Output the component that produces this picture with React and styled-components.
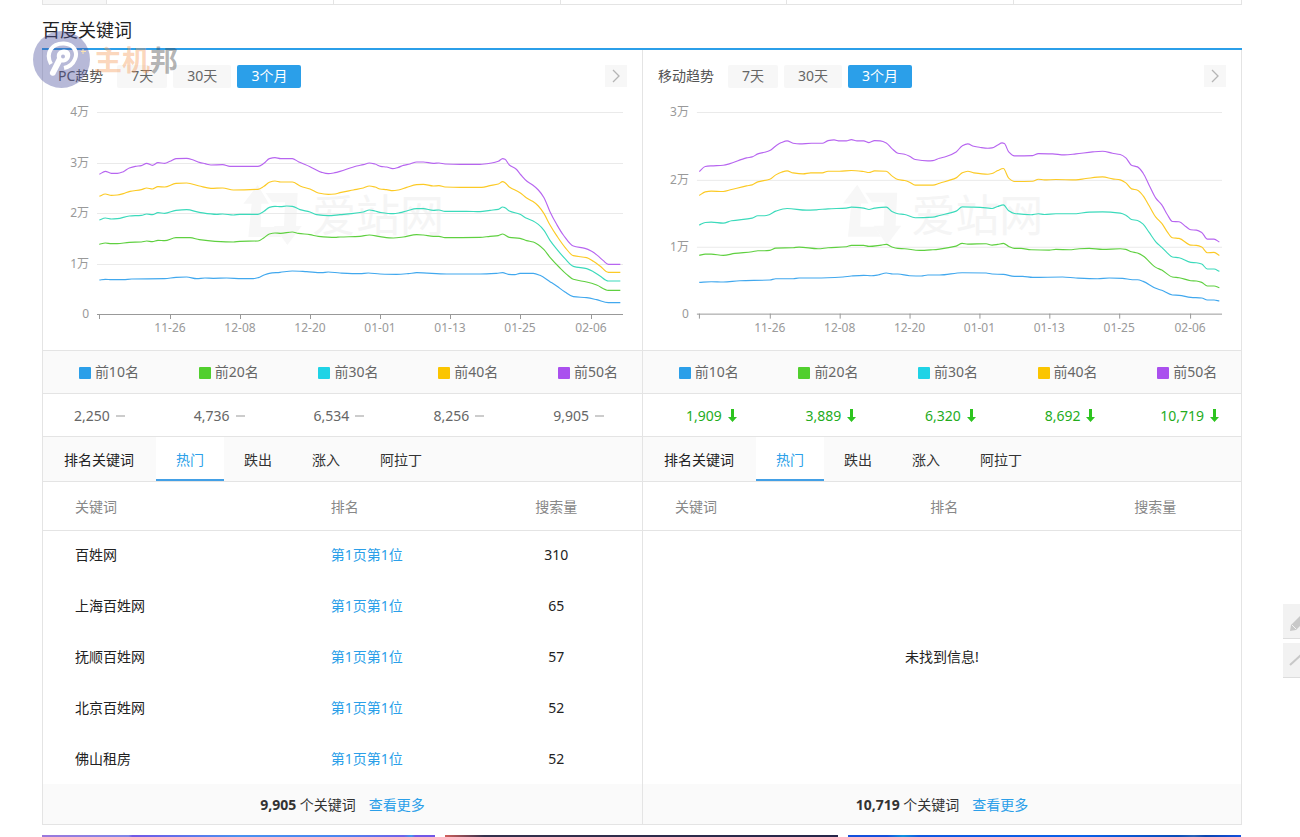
import React from "react";
import styled, { createGlobalStyle, css } from "styled-components";

const GlobalStyle = createGlobalStyle`
  *, *::before, *::after { box-sizing: border-box; }
  body {
    margin: 0;
    background: #fff;
    color: #333;
    font: 14px/20px "Noto Sans", "Noto Sans CJK SC", sans-serif;
  }
  button { font: inherit; border: 0; cursor: pointer; }
  a { text-decoration: none; }
`;

const Page = styled.div`
  padding: 0 58px 0 42px;
`;

const Content = styled.div`
  position: relative;
  max-width: 1200px;
  margin: 0 auto;
`;

const TopStrip = styled.div`
  display: grid;
  grid-template-columns: 64px repeat(5, 1fr);
  height: 5px;
  border: 1px solid #e4e4e4;
  border-top: 0;
`;

const TopCell = styled.div`
  border-right: 1px solid #e4e4e4;
  &:first-child { background: #f7f7f7; }
  &:last-child { border-right: 0; }
`;

const Title = styled.h2`
  margin: 0;
  height: 45px;
  padding-top: 12px;
  font-size: 18px;
  line-height: 26px;
  font-weight: 400;
  color: #222;
  border-bottom: 2px solid #2b9fe9;
`;

const Panels = styled.div`
  display: grid;
  grid-template-columns: 1fr 1fr;
  border: 1px solid #e4e4e4;
  border-top: 0;
`;

const Panel = styled.section`
  min-width: 0;
  & + & { border-left: 1px solid #e4e4e4; }
`;

const Toolbar = styled.div`
  display: flex;
  align-items: flex-start;
  gap: 6px;
  height: 50px;
  padding: 15px 15px 0;
`;

const ToolLabel = styled.span`
  margin-right: 8px;
  line-height: 22px;
  color: #555;
`;

const RangeButton = styled.button`
  height: 23px;
  padding: 0 14px 1px;
  line-height: 22px;
  border-radius: 2px;
  color: ${(p) => (p.$active ? "#fff" : "#666")};
  background: ${(p) => (p.$active ? "#2b9fe9" : "#f7f7f7")};
`;

const NextButton = styled.button`
  display: flex;
  align-items: center;
  justify-content: center;
  width: 22px;
  height: 22px;
  margin-left: auto;
  padding: 0;
  background: #f7f7f7;
`;

const ChartSvg = styled.svg`
  display: block;
  width: 100%;
  height: auto;
  text { font-size: 12px; fill: #999; }
  .mark { font-size: 44px; fill: #f5f5f5; }
`;

const Strip = styled.div`
  display: grid;
  grid-template-columns: repeat(5, 1fr);
  align-items: center;
  height: 43px;
  border-top: 1px solid #e4e4e4;
  background: ${(p) => (p.$shaded ? "#fafafa" : "#fff")};
`;

const StripCell = styled.div`
  display: flex;
  align-items: center;
  justify-content: center;
  gap: ${(p) => p.$gap}px;
  padding-top: ${(p) => p.$top || 0}px;
  padding-left: ${(p) => p.$left || 0}px;
  padding-right: ${(p) => p.$right || 0}px;
  color: ${(p) => (p.$down ? "#24ac1c" : "#666")};
`;

const Swatch = styled.span`
  width: 12px;
  height: 12px;
  margin-top: 2px;
  border-radius: 1px;
  background: ${(p) => p.$color};
`;

const Dash = styled.span`
  width: 9px;
  height: 2px;
  background: #ccc;
`;

const Tabs = styled.div`
  display: flex;
  height: 46px;
  border-top: 1px solid #e4e4e4;
  border-bottom: 1px solid #e4e4e4;
  background: #fafafa;
`;

const TabsLabel = styled.span`
  padding: 0 22px 0 21px;
  line-height: 46px;
  color: #222;
`;

const Tab = styled.button`
  padding: 4px 20px 0;
  background: transparent;
  border-bottom: 2px solid transparent;
  color: #333;
  ${(p) =>
    p.$active &&
    css`
      background: #fff;
      color: #2b9fe9;
      border-bottom-color: #43a0e6;
    `}
`;

const Table = styled.table`
  width: 100%;
  table-layout: fixed;
  border-collapse: separate;
  border-spacing: 0;
  th, td { padding: 0 32px; text-align: left; font-weight: 400; }
  th { height: 49px; padding-top: 2px; color: #888; border-bottom: 1px solid #e4e4e4; }
  td { height: 51px; color: #222; }
  tbody tr:first-child td { height: 49px; padding-bottom: 2px; }
  th:nth-child(1) { width: 42.7%; padding-right: 0; }
  th:nth-child(3), td:nth-child(3) { padding-left: 0; padding-right: 0; text-align: center; }
`;

const Empty = styled.p`
  display: flex;
  align-items: center;
  justify-content: center;
  height: 253px;
  margin: 0;
  color: #222;
`;

const Link = styled.a`
  color: #2b9fe9;
`;

const Footer = styled.div`
  display: flex;
  justify-content: center;
  gap: 13px;
  padding: 11px 0 9px;
  background: #fafafa;
`;

const Banners = styled.div`
  display: grid;
  grid-template-columns: repeat(3, 1fr);
  gap: 10px;
  margin-top: 10px;
  padding-right: 1px;
`;

const Banner = styled.a`
  height: 2px;
  background: ${(p) => p.$fill};
`;

const SiteMark = styled.div`
  position: absolute;
  top: 31px;
  left: -9px;
  display: flex;
  align-items: center;
  gap: 4px;
  pointer-events: none;
`;

const SiteName = styled.span`
  font-size: 28px;
  line-height: 40px;
  font-weight: 700;
  color: rgba(245, 150, 80, 0.4);
  span { color: rgba(60, 60, 60, 0.4); }
`;

const SideTools = styled.div`
  position: fixed;
  top: 604px;
  right: 0;
  display: grid;
  gap: 4px;
  width: 17px;
  overflow: hidden;
`;

const SideButton = styled.button`
  width: 36px;
  height: 35px;
  padding: 0;
  background: #f2f2f2;
  border-bottom: 1px solid #ddd;
  svg { display: block; }
`;

const COLORS = ["#2b9fe9", "#51cf2e", "#1fd3e6", "#fbc500", "#aa50ee"];
const LINES = ["#41a8ee", "#5fd040", "#3bdabb", "#fcca25", "#b765f0"];
const RANKS = ["前10名", "前20名", "前30名", "前40名", "前50名"];
const DATES = ["11-26", "12-08", "12-20", "01-01", "01-13", "01-25", "02-06"];
const TICKS = [127, 197, 267, 337, 407, 477, 548];

// Each series is a list of "x,y" points on a grid of three units per chart unit.
const PC_SERIES = [
  "178,555 196,553 214,554 250,554 275,552 374,551 408,547 440,546 470,551 495,549 520,550 560,549 605,551 640,551 655,548 672,540 688,535 720,532 757,528 800,530 845,533 865,531 900,534 960,536 985,534 1020,537 1070,538 1105,536 1130,533 1220,537 1320,537 1370,535 1388,533 1405,538 1425,539 1440,535 1480,535 1500,541 1530,560 1550,573 1575,591 1600,605 1640,608 1670,614 1705,623 1741,623",
  "178,448 196,444 214,446 232,446 268,442 304,441 320,438 337,440 354,436 374,437 408,428 450,428 478,434 525,439 580,441 600,439 654,438 672,428 688,417 705,414 722,415 757,411 775,415 810,419 835,424 885,427 900,426 960,424 988,420 1020,425 1060,429 1090,426 1130,419 1150,420 1180,424 1197,424 1215,428 1320,427 1350,424 1375,422 1388,417 1408,427 1440,430 1460,437 1480,441 1495,449 1512,464 1530,487 1560,519 1580,538 1600,553 1640,561 1670,570 1705,586 1741,586",
  "178,375 196,369 214,372 232,371 268,363 304,361 320,357 337,359 354,353 374,355 408,346 440,344 478,352 530,358 548,357 580,360 600,358 654,358 672,349 688,337 705,334 722,335 740,333 757,334 780,344 810,351 830,359 865,362 900,359 935,356 970,351 988,345 1005,348 1020,352 1060,356 1080,353 1100,348 1130,341 1150,341 1180,346 1197,345 1215,349 1280,349 1320,350 1350,346 1375,343 1388,336 1395,338 1408,348 1440,358 1460,370 1478,377 1495,388 1512,406 1530,436 1550,462 1575,491 1600,514 1640,521 1660,530 1680,543 1705,558 1741,558",
  "178,304 196,297 214,301 232,300 250,296 270,289 304,284 320,279 337,282 354,275 374,276 408,265 440,264 478,273 513,280 548,279 580,285 654,283 672,274 688,262 705,258 722,261 757,261 782,274 810,282 835,294 865,298 885,297 900,293 940,285 970,279 988,273 1005,276 1020,282 1040,284 1058,287 1075,285 1100,277 1130,269 1150,268 1180,273 1197,272 1215,276 1260,277 1325,277 1350,272 1375,267 1388,260 1395,263 1408,276 1440,293 1460,309 1478,319 1495,333 1512,356 1530,390 1550,422 1575,457 1600,482 1640,488 1660,499 1680,513 1705,532 1741,532",
  "178,238 196,229 214,235 232,235 250,230 268,219 286,214 304,212 320,205 337,211 354,203 374,205 390,199 408,191 440,190 460,195 478,202 495,206 513,210 548,209 570,214 654,214 672,205 688,191 705,188 722,191 757,191 775,200 810,215 845,232 865,236 885,233 900,229 950,213 970,209 988,204 1005,207 1022,214 1040,216 1058,221 1075,217 1090,211 1110,207 1130,201 1150,201 1180,205 1197,204 1215,207 1260,208 1320,208 1355,204 1375,199 1388,191 1395,193 1408,210 1428,222 1443,240 1460,258 1478,270 1495,285 1512,308 1530,350 1550,388 1570,420 1600,453 1635,460 1655,469 1672,481 1690,497 1705,508 1741,508",
];

const MOBILE_SERIES = [
  "178,563 214,561 250,562 300,558 390,556 408,552 460,552 478,550 530,550 610,547 635,544 672,542 695,543 715,541 740,535 760,538 775,538 810,543 845,544 865,541 900,541 968,534 1040,535 1058,538 1092,539 1125,545 1150,545 1180,548 1270,547 1310,550 1375,552 1410,550 1450,551 1480,555 1495,555 1512,560 1550,581 1568,587 1600,601 1620,602 1655,608 1688,610 1705,616 1725,616 1741,619",
  "178,482 196,478 214,478 250,482 285,476 337,471 354,468 374,468 390,467 408,460 460,459 478,457 535,462 565,459 620,456 635,452 672,452 688,455 725,451 740,449 757,457 775,461 795,462 840,467 880,465 900,463 950,454 968,446 985,448 1040,447 1058,451 1075,449 1092,446 1108,455 1125,461 1145,461 1175,465 1230,466 1250,464 1290,465 1320,462 1350,461 1390,464 1443,462 1460,464 1477,471 1495,475 1512,484 1550,518 1568,526 1600,547 1620,549 1655,558 1672,559 1688,563 1705,574 1725,574 1741,579",
  "178,391 196,383 214,382 250,385 275,378 337,370 354,363 374,363 390,359 408,349 442,341 500,346 530,345 565,342 620,340 635,337 672,340 688,344 705,340 740,337 757,350 775,357 795,359 827,369 880,367 900,362 950,349 968,336 1003,337 1040,339 1058,341 1075,335 1092,330 1108,348 1125,356 1175,360 1197,357 1215,359 1250,357 1300,357 1350,352 1390,351 1443,355 1460,361 1477,374 1495,377 1512,388 1530,413 1550,441 1568,458 1585,475 1600,487 1620,489 1655,503 1672,504 1688,508 1705,523 1725,523 1741,530",
  "178,302 196,291 214,289 250,290 275,284 320,273 337,270 354,261 390,253 408,240 425,232 442,228 460,234 490,237 513,234 548,234 565,229 600,229 635,227 672,230 688,233 705,228 740,229 757,243 775,254 795,257 810,262 827,271 880,271 900,265 950,249 968,234 985,229 1003,234 1045,238 1058,236 1075,227 1092,221 1108,250 1125,260 1180,259 1197,253 1215,255 1250,254 1310,255 1340,251 1390,246 1420,252 1443,255 1460,264 1477,282 1495,286 1512,303 1530,333 1550,367 1568,386 1585,412 1600,429 1620,431 1655,451 1672,452 1688,457 1705,474 1725,473 1741,482",
  "178,230 196,215 214,213 250,211 268,207 320,189 337,186 354,177 374,172 390,167 408,153 425,143 442,138 460,145 480,147 515,145 548,145 565,137 583,135 600,138 620,138 635,134 652,138 672,138 688,143 705,137 722,138 740,144 757,161 775,175 795,178 810,184 827,194 865,198 880,197 900,190 920,185 950,171 968,153 985,147 1003,154 1020,157 1045,160 1058,159 1075,150 1088,144 1095,146 1108,171 1125,183 1180,182 1197,176 1240,177 1275,180 1310,177 1360,171 1390,169 1420,175 1443,179 1460,189 1477,211 1495,216 1512,235 1530,271 1550,310 1568,330 1585,360 1600,380 1620,381 1640,395 1655,405 1672,406 1688,413 1705,433 1725,433 1741,442",
];

// Joins the points with cubic curves that never overshoot a peak or a dip.
function smoothPath(series) {
  const pts = series.split(" ").map((p) => p.split(",").map(Number));
  const slope = (a, b) => (b[1] - a[1]) / (b[0] - a[0]);
  const tangents = pts.map((p, i) => {
    if (i === 0) return slope(p, pts[1]);
    if (i === pts.length - 1) return slope(pts[i - 1], p);
    const before = slope(pts[i - 1], p);
    const after = slope(p, pts[i + 1]);
    return before * after <= 0 ? 0 : (2 * before * after) / (before + after);
  });
  return pts.reduce((d, p, i) => {
    if (i === 0) return `M${p[0]} ${p[1]}`;
    const q = pts[i - 1];
    const h = (p[0] - q[0]) / 3;
    return `${d}C${q[0] + h} ${q[1] + tangents[i - 1] * h} ${p[0] - h} ${p[1] - tangents[i] * h} ${p[0]} ${p[1]}`;
  }, "");
}

function TrendChart({ series, scale, name }) {
  return (
    <ChartSvg viewBox="0 0 599 250" role="img" aria-label={name}>
      <g transform="translate(-3 -5) scale(0.33333)" fill="#f7f7f7">
        <path d="M653 270L610 326H635L625 426H724L705 396H662L664 326H687Z" />
        <path d="M677 294H773L768 393H785L742 450L702 393H732L735 322H697Z" />
      </g>
      <text className="mark" x="269" y="132">爱站网</text>
      {scale.map(([label, y]) => (
        <g key={label}>
          {label !== "0" && <path d={`M54 ${y + 0.5}H580`} stroke="#eaeaea" />}
          <text x="46" y={y + 4} textAnchor="end">{label}</text>
        </g>
      ))}
      <path d="M54 214.5H580M56.5 214V219" stroke="#999" />
      {DATES.map((date, i) => (
        <g key={date}>
          <path d={`M${TICKS[i] + 0.5} 214V219`} stroke="#999" />
          <text x={TICKS[i]} y="232" textAnchor="middle">{date}</text>
        </g>
      ))}
      <g transform="translate(-3 -5) scale(0.33333)" fill="none" strokeWidth="3.4">
        {series.map((s, i) => (
          <path key={i} d={smoothPath(s)} stroke={LINES[i]} />
        ))}
      </g>
    </ChartSvg>
  );
}

function DownArrow() {
  return (
    <svg width="9" height="13" viewBox="0 0 9 13" aria-hidden="true">
      <path d="M3 0H6V8H9L4.500 13L0 8H3Z" fill="#2dc41f" />
    </svg>
  );
}

function TrendPanel({ title, series, scale, values, down, rows, total }) {
  return (
    <Panel>
      <Toolbar>
        <ToolLabel>{title}</ToolLabel>
        <RangeButton type="button">7天</RangeButton>
        <RangeButton type="button">30天</RangeButton>
        <RangeButton type="button" $active>3个月</RangeButton>
        <NextButton type="button" aria-label="下一页">
          <svg width="10" height="14" viewBox="0 0 10 14">
            <path d="M2 1L8 7L2 13" fill="none" stroke="#b5b5b5" strokeWidth="1.3" />
          </svg>
        </NextButton>
      </Toolbar>
      <TrendChart series={series} scale={scale} name={title} />
      <Strip $shaded>
        {RANKS.map((rank, i) => (
          <StripCell key={rank} $gap={4} $left={12}>
            <Swatch $color={COLORS[i]} />
            {rank}
          </StripCell>
        ))}
      </Strip>
      <Strip>
        {values.map((value) => (
          <StripCell key={value} $gap={6} $top={2} $down={down} $left={down ? 17 : 0} $right={down ? 0 : 7}>
            {value}
            {down ? <DownArrow /> : <Dash />}
          </StripCell>
        ))}
      </Strip>
      <Tabs>
        <TabsLabel>排名关键词</TabsLabel>
        <Tab type="button" $active>热门</Tab>
        <Tab type="button">跌出</Tab>
        <Tab type="button">涨入</Tab>
        <Tab type="button">阿拉丁</Tab>
      </Tabs>
      <Table>
        <thead>
          <tr>
            <th scope="col">关键词</th>
            <th scope="col">排名</th>
            <th scope="col">搜索量</th>
          </tr>
        </thead>
        {rows.length > 0 && (
          <tbody>
            {rows.map(([word, volume]) => (
              <tr key={word}>
                <td>{word}</td>
                <td><Link href="#">第1页第1位</Link></td>
                <td>{volume}</td>
              </tr>
            ))}
          </tbody>
        )}
      </Table>
      {rows.length === 0 && <Empty>未找到信息!</Empty>}
      <Footer>
        <span><strong>{total}</strong> 个关键词</span>
        <Link href="#">查看更多</Link>
      </Footer>
    </Panel>
  );
}

export default function App() {
  return (
    <Page>
      <GlobalStyle />
      <Content>
        <TopStrip>
          {[0, 1, 2, 3, 4, 5].map((i) => <TopCell key={i} />)}
        </TopStrip>
        <Title>百度关键词</Title>
        <Panels>
          <TrendPanel
            title="PC趋势"
            series={PC_SERIES}
            scale={[["4万", 12], ["3万", 63], ["2万", 113], ["1万", 164], ["0", 214]]}
            values={["2,250", "4,736", "6,534", "8,256", "9,905"]}
            rows={[["百姓网", 310], ["上海百姓网", 65], ["抚顺百姓网", 57], ["北京百姓网", 52], ["佛山租房", 52]]}
            total="9,905"
          />
          <TrendPanel
            title="移动趋势"
            series={MOBILE_SERIES}
            scale={[["3万", 12], ["2万", 80], ["1万", 147], ["0", 214]]}
            values={["1,909", "3,889", "6,320", "8,692", "10,719"]}
            down
            rows={[]}
            total="10,719"
          />
        </Panels>
        <Banners>
          <Banner href="#" aria-label="广告一" $fill="linear-gradient(90deg, #9b78dc, #7f86e8 22%, #7158e6 23%, #4a90f0 50%, #4a86f0 75%, #6e62e8 92%, #3f98ee 94%, #7158e6 95%)" />
          <Banner href="#" aria-label="广告二" $fill="linear-gradient(90deg, #d0605c, #35304c 10%, #26264a)" />
          <Banner href="#" aria-label="广告三" $fill="linear-gradient(90deg, #1450dc 10%, #1090e0 14%, #1058e0 18%, #0a60e8 60%, #0a4cb8 84%, #2a62b8 88%, #0a44b0 91%, #1450dc)" />
        </Banners>
        <SiteMark>
          <svg width="57" height="57" viewBox="0 0 57 57" aria-hidden="true">
            <circle cx="28.500" cy="28.500" r="28.500" fill="rgba(76, 80, 158, 0.4)" />
            <path d="M18 33C12 22 19 12 31 12.500C41 13 45 21 42 28C40 33 36 36 31 37" fill="none" stroke="#fff" strokeWidth="4" />
            <path d="M31 18.500C36 18.500 38 22 37 26C36 30 32 32 28.500 31.500L22 44C20 46 16 44 17 41L24 27C23 22 26 18.500 31 18.500Z" fill="#fff" />
            <circle cx="30" cy="25.500" r="2" fill="#b7b9d8" />
            <path d="M50 18V23M48 20.500H53" stroke="#fbe3b0" />
          </svg>
          <SiteName>主机<span>邦</span></SiteName>
        </SiteMark>
      </Content>
      <SideTools>
        <SideButton type="button" aria-label="反馈">
          <svg width="36" height="34" viewBox="0 0 36 34">
            <path d="M7 27L8 21L20 9L25 14L13 26Z" fill="#c8c8c8" />
            <path d="M9 21L13 25" stroke="#f2f2f2" />
          </svg>
        </SideButton>
        <SideButton type="button" aria-label="返回顶部">
          <svg width="36" height="34" viewBox="0 0 36 34">
            <path d="M7 22L18 12L29 22" fill="none" stroke="#c8c8c8" strokeWidth="2" />
          </svg>
        </SideButton>
      </SideTools>
    </Page>
  );
}
